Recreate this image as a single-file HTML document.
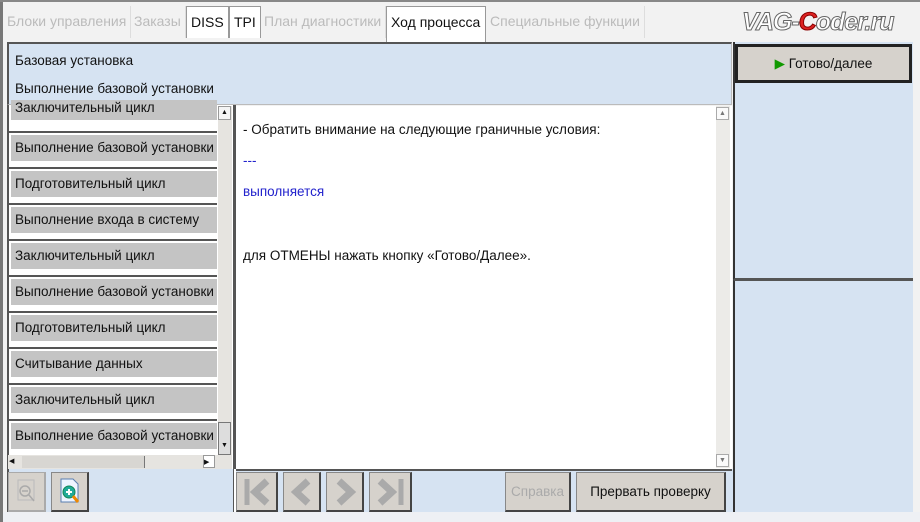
<!DOCTYPE html><html><head><meta charset="utf-8"><style>
body{margin:0;width:920px;height:522px;background:#f2f2f2;position:relative;overflow:hidden;font-family:"Liberation Sans",Arial,sans-serif;font-size:13.5px;color:#111}
.a{position:absolute;box-sizing:border-box}
.tab{top:6px;height:32px;line-height:30px;color:#bbb;font-size:14px;padding:0 4px;border-right:1px solid #ddd;white-space:nowrap}
.tab.on{color:#111;background:#fff;border:1px solid #999;border-bottom:none}
.blue{background:#d6e3f2}
.item{left:11px;width:206px;height:26px;background:#c4c4c4;line-height:26px;padding-left:4px;white-space:nowrap;overflow:hidden}
.sep{left:8px;width:209px;height:2px;background:#555}
.btn{background:#d6d2cc;border:1px solid #888;border-right:2px solid #444;border-bottom:2px solid #444}
</style></head><body>
<div class="a" style="left:0;top:0;width:3px;height:522px;background:#777"></div>
<div class="a" style="left:0;top:0;width:920px;height:2px;background:#888"></div>
<div class="a tab" style="left:3px">Блоки управления</div>
<div class="a tab" style="left:130px">Заказы</div>
<div class="a tab on" style="left:186px">DISS</div>
<div class="a tab on" style="left:229px">TPI</div>
<div class="a tab" style="left:260px">План диагностики</div>
<div class="a tab on" style="left:386px;width:100px;height:36px">Ход процесса</div>
<div class="a tab" style="left:486px">Специальные функции</div>
<div class="a" style="left:742px;top:8px;font-size:25px;font-style:italic;color:#fff;-webkit-text-stroke:1px #666;font-weight:bold;letter-spacing:-1px">VAG-<span style="color:#d22;-webkit-text-stroke:1px #800">C</span>oder.ru</div>
<div class="a blue" style="left:7px;top:42px;width:725px;height:63px;border:2px solid #555;border-right:1px solid #bbb;border-bottom:1px solid #bbb"></div>
<div class="a" style="left:15px;top:53px">Базовая установка</div>
<div class="a" style="left:15px;top:81px">Выполнение базовой установки</div>
<div class="a blue" style="left:733px;top:42px;width:180px;height:238px;border-left:2px solid #333;border-bottom:2px solid #555"></div>
<div class="a blue" style="left:733px;top:280px;width:180px;height:232px;border-left:2px solid #333;border-top:1px solid #555"></div>
<div class="a btn" style="left:735px;top:44px;width:177px;height:39px;border:3px solid #222;text-align:center;line-height:33px;font-size:13.5px"><span style="color:#190">▶</span> Готово/далее</div>
<div class="a" style="left:7px;top:105px;width:227px;height:365px;background:#fff;border-left:2px solid #555"></div>
<div class="a item" style="top:100px;height:20px;line-height:16px">Заключительный цикл</div>
<div class="a sep" style="top:131px"></div><div class="a item" style="top:135px">Выполнение базовой установки</div>
<div class="a sep" style="top:167px"></div><div class="a item" style="top:171px">Подготовительный цикл</div>
<div class="a sep" style="top:203px"></div><div class="a item" style="top:207px">Выполнение входа в систему</div>
<div class="a sep" style="top:239px"></div><div class="a item" style="top:243px">Заключительный цикл</div>
<div class="a sep" style="top:275px"></div><div class="a item" style="top:279px">Выполнение базовой установки</div>
<div class="a sep" style="top:311px"></div><div class="a item" style="top:315px">Подготовительный цикл</div>
<div class="a sep" style="top:347px"></div><div class="a item" style="top:351px">Считывание данных</div>
<div class="a sep" style="top:383px"></div><div class="a item" style="top:387px">Заключительный цикл</div>
<div class="a sep" style="top:419px"></div><div class="a item" style="top:423px">Выполнение базовой установки</div>
<div class="a" style="left:218px;top:106px;width:14px;height:349px;background:#e6e4e0"></div>
<div class="a" style="left:218px;top:106px;width:13px;height:14px;background:#f4f4f4;border:1px solid #999;font-size:7px;text-align:center;line-height:12px">▲</div>
<div class="a" style="left:218px;top:422px;width:13px;height:33px;border:1px solid #777;background:#ddd"></div>
<div class="a" style="left:218px;top:440px;width:13px;height:14px;font-size:7px;text-align:center;line-height:12px">▼</div>
<div class="a" style="left:8px;top:455px;width:224px;height:14px;background:#e6e4e0"></div>
<div class="a" style="left:9px;top:455px;width:11px;height:13px;font-size:7px;line-height:13px">◀</div>
<div class="a" style="left:22px;top:456px;width:123px;height:12px;background:#d8d6d2;border-right:1px solid #777"></div>
<div class="a" style="left:203px;top:455px;width:12px;height:13px;font-size:7px;line-height:13px;background:#fff;border:1px solid #999">▶</div>
<div class="a" style="left:233px;top:105px;width:3px;height:365px;background:#555"></div>
<div class="a" style="left:236px;top:106px;width:496px;height:363px;background:#fff"></div>
<div class="a" style="left:716px;top:106px;width:14px;height:362px;background:#ecebe8"></div>
<div class="a" style="left:716px;top:107px;width:13px;height:13px;border:1px solid #aaa;font-size:7px;color:#777;text-align:center;line-height:12px;background:#fafafa">▲</div>
<div class="a" style="left:716px;top:454px;width:13px;height:13px;border:1px solid #aaa;font-size:7px;color:#777;text-align:center;line-height:12px;background:#fafafa">▼</div>
<div class="a" style="left:243px;top:122px">- Обратить внимание на следующие граничные условия:</div>
<div class="a" style="left:243px;top:153px;color:#2222cc">---</div>
<div class="a" style="left:243px;top:184px;color:#2222cc">выполняется</div>
<div class="a" style="left:243px;top:248px">для ОТМЕНЫ нажать кнопку «Готово/Далее».</div>
<div class="a blue" style="left:7px;top:469px;width:726px;height:43px;border-left:2px solid #555"></div>
<div class="a" style="left:233px;top:469px;width:3px;height:43px;background:#fff;border-left:1px solid #555"></div>
<div class="a" style="left:236px;top:469px;width:496px;height:2px;background:#555"></div>
<div class="a btn" style="left:8px;top:472px;width:38px;height:40px;border-color:#aaa"><svg width="36" height="36"><rect x="9" y="7" width="16" height="20" fill="none" stroke="#bbb"/><circle cx="16" cy="18" r="5" fill="none" stroke="#aaa" stroke-width="1.5"/><path d="M13 18h6M20 22l5 6" stroke="#aaa" stroke-width="1.5"/></svg></div>
<div class="a btn" style="left:51px;top:472px;width:38px;height:40px"><svg width="36" height="36"><path d="M9 6h12l5 5v18H9z" fill="#eef4ff" stroke="#5a7fb0"/><circle cx="17" cy="19" r="6" fill="#2a9" stroke="#185"/><path d="M14 19h6M17 16v6" stroke="#fff" stroke-width="2"/><path d="M21 23l5 6" stroke="#e80" stroke-width="3"/></svg></div>
<div class="a btn" style="left:236px;top:472px;width:42px;height:40px"><svg width="40" height="38"><path d="M10 6v26" stroke="#aaa" stroke-width="5"/><path d="M30 8L18 19l12 11" fill="none" stroke="#aaa" stroke-width="7"/></svg></div>
<div class="a btn" style="left:283px;top:472px;width:38px;height:40px"><svg width="36" height="38"><path d="M24 8L12 19l12 11" fill="none" stroke="#aaa" stroke-width="7"/></svg></div>
<div class="a btn" style="left:326px;top:472px;width:38px;height:40px"><svg width="36" height="38"><path d="M12 8l12 11-12 11" fill="none" stroke="#aaa" stroke-width="7"/></svg></div>
<div class="a btn" style="left:369px;top:472px;width:43px;height:40px"><svg width="40" height="38"><path d="M10 8l12 11-12 11" fill="none" stroke="#aaa" stroke-width="7"/><path d="M31 6v26" stroke="#aaa" stroke-width="5"/></svg></div>
<div class="a btn" style="left:505px;top:472px;width:66px;height:40px;color:#aaa;text-align:center;line-height:38px">Справка</div>
<div class="a btn" style="left:576px;top:472px;width:150px;height:40px;text-align:center;line-height:38px">Прервать проверку</div>
<div class="a" style="left:3px;top:512px;width:917px;height:10px;background:#eef0f4"></div>
</body></html>
